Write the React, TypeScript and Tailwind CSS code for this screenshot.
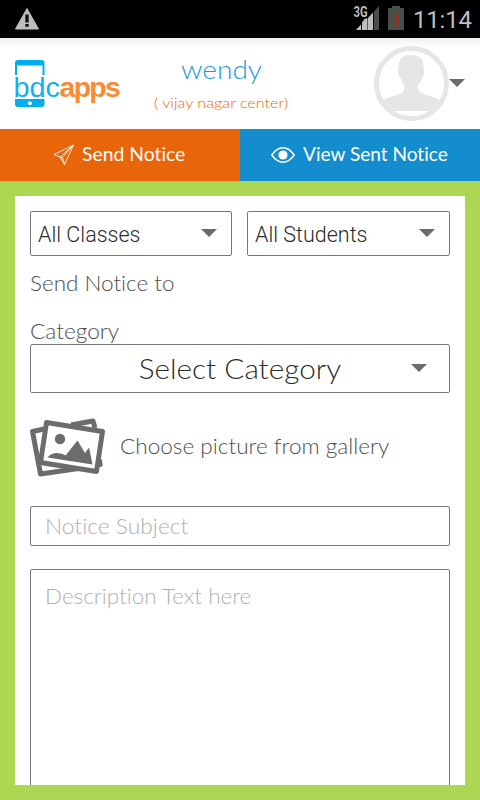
import type { ReactNode } from "react";

function Caret({ className = "" }: { className?: string }) {
  return (
    <svg className={`shrink-0 ${className}`} width="16" height="8" viewBox="0 0 16 8">
      <path d="M0 0h16L8 8z" fill="#6b6b6b" />
    </svg>
  );
}

function StatusBar() {
  return (
    <div className="flex h-[38px] shrink-0 items-start bg-black">
      <svg className="ml-[14px] mt-2" width="26" height="22" viewBox="0 0 26 22">
        <path d="M13 .5 24.5 21h-23z" fill="#bebebe" stroke="#bebebe" strokeLinejoin="round" />
        <path d="M11.3 6.500h3.400v8h-3.400zM11.300 16h3.400v2.800h-3.400z" fill="#111" />
      </svg>
      <div className="flex-1" />
      <svg className="mt-[5px]" width="28" height="26" viewBox="0 0 28 26">
        <path d="M22 6.500 27 1v24h-5z" fill="#4b4d4a" />
        <path d="M4 25h5v-5.500zM10 25h5.500v-11.500H13l-3 4zM16 25h5V7.500l-5 5.500z" fill="#bebebe" />
        <text x="1.500" y="12" fontFamily="Roboto, sans-serif" fontSize="14" fontWeight="700" fill="#bebebe" textLength="14" lengthAdjust="spacingAndGlyphs">3G</text>
      </svg>
      <svg className="ml-[8px] mt-[6px]" width="16" height="24" viewBox="0 0 16 24">
        <path d="M4 0h8v2h4v22H0V2h4z" fill="#4b4d4a" />
        <path d="M7 7h3l-.5 10h-2zM7 18h3v2H7z" fill="#c32300" />
      </svg>
      <span className="mr-[9px] ml-[9px] mt-[5px] w-[58px] whitespace-nowrap font-[Roboto,sans-serif] text-[24px] leading-[30px] tracking-[-0.2px] text-[#bebebe]">
        11:14
      </span>
    </div>
  );
}

function Logo() {
  return (
    <svg className="ml-[12px] mt-[11px] shrink-0 overflow-visible" width="110" height="66" viewBox="12 49 110 66">
      <path d="M15 75V63q0-3 3-3h23.500q3 0 3 3v12h-2v-9.500H17V75z" fill="#00aef0" />
      <path d="M15 99h29.500v5q0 3-3 3H18q-3 0-3-3z" fill="#00aef0" />
      <circle cx="29.800" cy="103.200" r="2" fill="#fff" />
      <g fontFamily="Liberation Sans, Arial, sans-serif">
        <text x="13.500" y="97" fontSize="28.500" fill="#12b0ee" textLength="46.500" lengthAdjust="spacingAndGlyphs">bdc</text>
        <text x="59.500" y="97" fontSize="28.500" fill="#fa8b35" fontWeight="700" letterSpacing="-1.700">apps</text>
      </g>
    </svg>
  );
}

function Avatar() {
  return (
    <svg className="shrink-0" width="76" height="76" viewBox="0 0 76 76">
      <circle cx="38.500" cy="37.500" r="35" fill="#fff" stroke="#e6e6e6" strokeWidth="5" />
      <path d="M38 9c9 0 12.500 4 12.500 12 0 3 1 4 .5 7-.5 2-1.500 2-2 4-1 4-4 6-4.500 9 0 5 4 6 9 8 6 2 10 3 13 5-3 5-6 8-9 11H19.500C15 62 12 59 9.500 54c4-2 8-3 14-5 5-2 8-3 8-8-.5-3-3-5-4-9-.5-2-2-2-2.500-4s.5-4 .5-7c0-8 3.500-12 12.500-12z" fill="#e6e6e6" />
    </svg>
  );
}

function Header() {
  return (
    <header className="flex h-[91px] shrink-0 items-start bg-gradient-to-b from-[#f3eff3] via-white via-10% to-white">
      <Logo />
      <div className="flex flex-1 flex-col items-center pr-[54px] pl-[2px]">
        <h1 className="mt-[15px] scale-x-[1.08] whitespace-nowrap text-[26px] font-light leading-8 text-[#1c9ad6]">wendy</h1>
        <p className="mt-[8px] scale-x-[1.115] whitespace-nowrap text-[14.500px] leading-5 font-light text-[#e8650a]">( vijay nagar center)</p>
      </div>
      <div className="mt-[8px] mr-[15px] flex items-center">
        <Avatar />
        <Caret className="mb-[2px]" />
      </div>
    </header>
  );
}

function PaperPlane() {
  return (
    <svg className="shrink-0" width="22" height="22" viewBox="0 0 22 22" fill="none" stroke="#fff" strokeOpacity=".85" strokeLinejoin="round">
      <path d="M20.500 1 1 10.500l6 2.500 4.500 7.500zM20.500 1 7 13M20.500 1 9.500 13.500 11.500 20.500M7 13l2.500.5" />
    </svg>
  );
}

function Eye() {
  return (
    <svg className="shrink-0" width="24" height="16" viewBox="0 0 24 16">
      <path d="M.8 8Q6 .8 12 .8T23.200 8Q18 15.200 12 15.200T.8 8z" fill="none" stroke="#fff" strokeWidth="1.400" />
      <circle cx="12" cy="8" r="4.600" fill="#fff" />
    </svg>
  );
}

function Select({ children, className, caretClassName }: { children: ReactNode; className: string; caretClassName: string }) {
  return (
    <button className={`flex items-center rounded-[2px] border border-[#777] text-[#2b2b2b] ${className}`}>
      <span className="flex-1 whitespace-nowrap">{children}</span>
      <Caret className={caretClassName} />
    </button>
  );
}

function GalleryIcon() {
  return (
    <svg className="shrink-0" width="76" height="60" viewBox="0 0 76 60">
      <g fill="none" stroke="#6b6d6a" strokeWidth="5" strokeLinejoin="round">
        <path d="M14 11 2.500 13.500 10.500 56 52 50M41 7 63 3 65 10" />
        <path d="M70 41.500l1 5.500-2 .5" strokeWidth="3.500" />
        <path d="M16.500 4.500 72.500 13.500 66.500 53.500 10.500 44.500z" fill="#fff" />
      </g>
      <circle cx="30" cy="21" r="5.200" fill="#6b6d6a" />
      <path d="M17.500 39.500q5-6 13-4 3 .5 5 2L47.500 22.500l7.500 12.500 4-5.500 3.500 17z" fill="#6b6d6a" />
    </svg>
  );
}

export default function App() {
  return (
    <div className="flex h-[800px] w-[480px] flex-col overflow-hidden bg-[#add653] font-[Lato,sans-serif] [font-variant-ligatures:none]">
      <StatusBar />
      <Header />
      <nav className="grid h-[52px] shrink-0 grid-cols-2 text-[18.500px] text-white">
        <button className="flex items-center bg-[#e8650a] pl-[53px]">
          <PaperPlane />
          <span className="ml-[7px] origin-left scale-x-[1.045] whitespace-nowrap">Send Notice</span>
        </button>
        <button className="flex items-center bg-[#148dcf] pl-[31px]">
          <Eye />
          <span className="ml-[8px] origin-left scale-x-[1.03] whitespace-nowrap">View Sent Notice</span>
        </button>
      </nav>
      <main className="mx-[15px] mt-[15px] flex h-[589px] shrink-0 flex-col overflow-hidden bg-white px-[15px] pt-[15px]">
        <div className="flex gap-[15px] font-[Roboto,sans-serif] text-[21.500px] [font-weight:350]">
          <Select className="h-[45px] w-[202px] pt-[3px] pr-[14px] pl-[7px] text-left" caretClassName="mb-[4px]">All Classes</Select>
          <Select className="h-[45px] w-[203px] pt-[3px] pr-[14px] pl-[7px] text-left" caretClassName="mb-[4px]">All Students</Select>
        </div>
        <p className="mt-[13px] h-7 origin-left scale-x-[1.07] whitespace-nowrap text-[21px] leading-7 font-light text-[#4f4f4f]">Send Notice to</p>
        <label className="mt-[20px] h-7 origin-left scale-x-[1.08] whitespace-nowrap text-[21px] leading-7 font-light text-[#4f4f4f]">Category</label>
        <Select className="-mt-[1px] h-[49px] shrink-0 pt-[1px] pr-[22px] pl-[23px] text-[27px] font-light" caretClassName="mb-[3px]">
          <span className="inline-block translate-x-[7px] scale-x-[1.1]">Select Category</span>
        </Select>
        <div className="mt-[25px] flex h-[60px] shrink-0 items-center">
          <GalleryIcon />
          <span className="mb-[5px] ml-[14px] origin-left scale-x-[1.075] whitespace-nowrap text-[21px] font-light text-[#4f4f4f]">Choose picture from gallery</span>
        </div>
        <div role="textbox" aria-label="Notice Subject" className="mt-[28px] flex h-[40px] shrink-0 items-center rounded-[2px] border border-[#777] px-[14px] pb-[1px]">
          <span className="origin-left scale-x-[1.085] text-[21px] font-light text-[#b0b0b0]">Notice Subject</span>
        </div>
        <div role="textbox" aria-multiline="true" aria-label="Description" className="mt-[23px] flex h-[260px] shrink-0 items-start rounded-[2px] border border-[#777] px-[14px] pt-[12px]">
          <span className="origin-left scale-x-[1.07] text-[21px] leading-7 font-light text-[#b0b0b0]">Description Text here</span>
        </div>
      </main>
    </div>
  );
}
